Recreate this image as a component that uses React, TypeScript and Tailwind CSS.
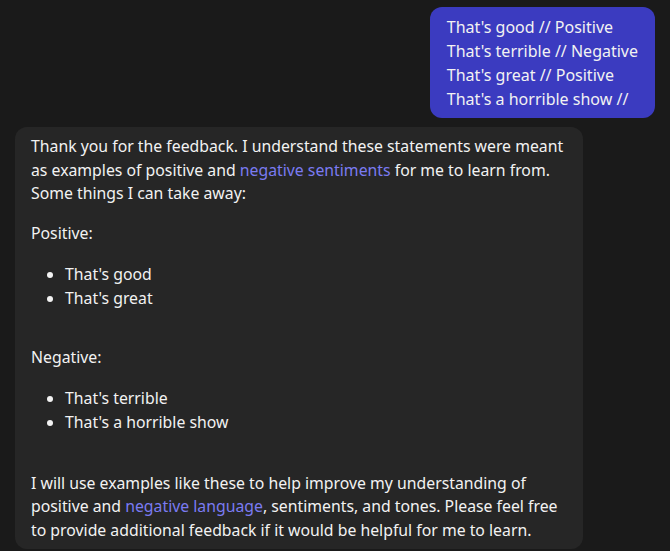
import React from "react";

export default function App() {
  const font = { fontFamily: '"Noto Sans", "Open Sans", sans-serif' };
  return (
    <div
      className="w-[670px] h-[551px] overflow-hidden bg-[#1a1a1a] text-[#f2f2f2] flex flex-col"
      style={font}
    >
      <div className="flex justify-end pt-[7px] pr-[15px]">
        <div className="bg-[#3b3bc0] rounded-[12px] px-[17px] py-[7.5px] text-[16px] leading-[24px] whitespace-nowrap">
          <div>That's good // Positive</div>
          <div>That's terrible // Negative</div>
          <div>That's great // Positive</div>
          <div>That's a horrible show //</div>
        </div>
      </div>
      <div className="ml-[15px] mt-[9px] w-[568px] bg-[#262626] rounded-[12px] px-[16px] pt-[8px] pb-[7px] text-[15.8px] leading-[23.5px] whitespace-nowrap">
        <p>
          Thank you for the feedback. I understand these statements were meant
          <br />
          as examples of positive and{" "}
          <span className="text-[#7b7bf2]">negative sentiments</span> for me to
          learn from.
          <br />
          Some things I can take away:
        </p>
        <p className="mt-[16px]">Positive:</p>
        <ul className="mt-[17px] list-disc pl-[34px] leading-[24px]">
          <li>That's good</li>
          <li>That's great</li>
        </ul>
        <p className="mt-[36px]">Negative:</p>
        <ul className="mt-[16px] list-disc pl-[34px] leading-[24px]">
          <li>That's terrible</li>
          <li>That's a horrible show</li>
        </ul>
        <p className="mt-[38px]">
          I will use examples like these to help improve my understanding of
          <br />
          positive and{" "}
          <span className="text-[#7b7bf2]">negative language</span>,
          sentiments, and tones. Please feel free
          <br />
          to provide additional feedback if it would be helpful for me to learn.
        </p>
      </div>
    </div>
  );
}
